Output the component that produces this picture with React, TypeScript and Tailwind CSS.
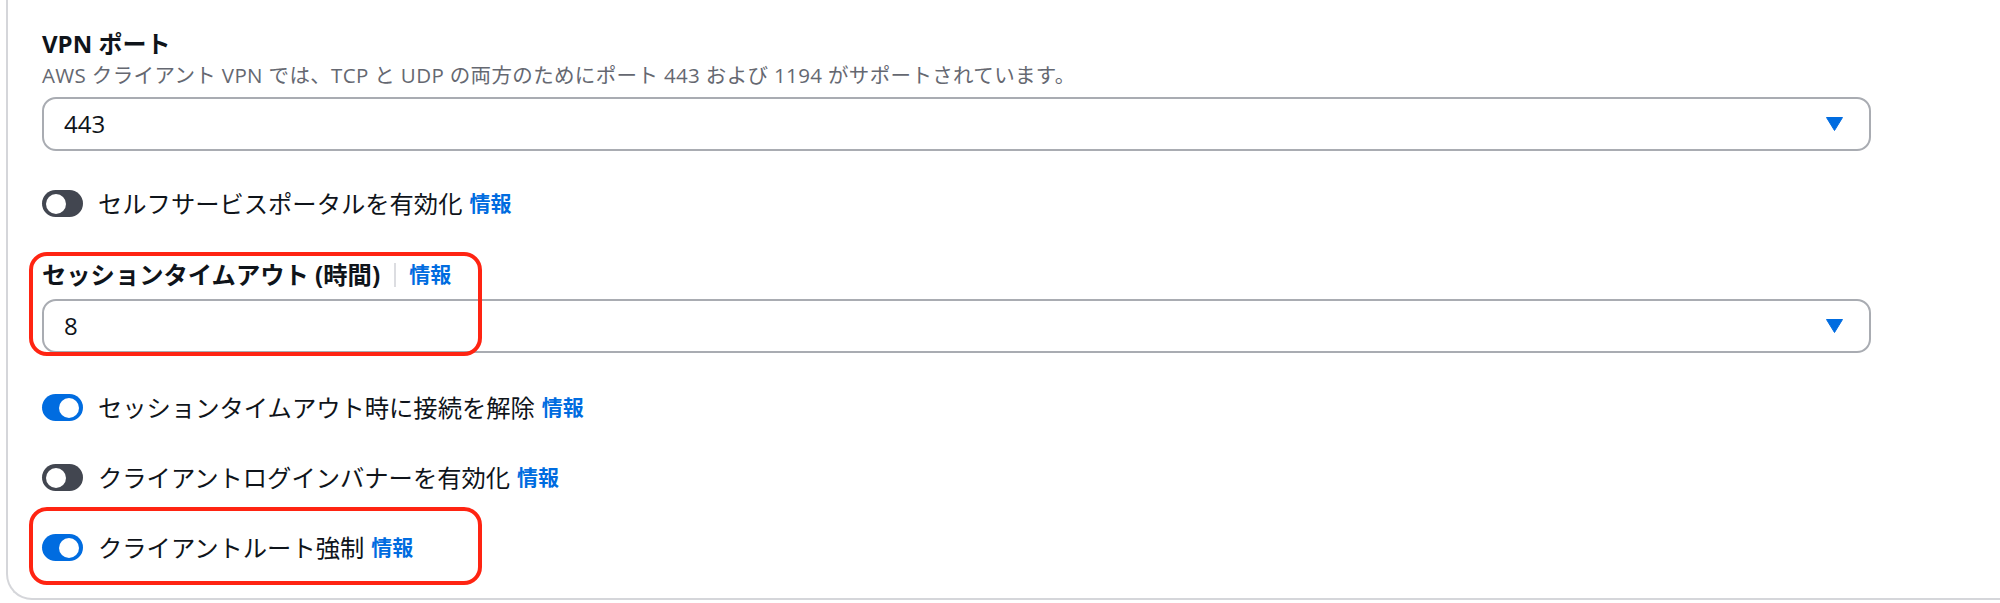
import React from "react";

const font = "font-['Open_Sans','Noto_Sans_CJK_JP',sans-serif]";

function Info() {
  return <a className="ml-[7px] text-[21px] font-bold text-[#006ce0]">情報</a>;
}

function Toggle({ on }: { on: boolean }) {
  return (
    <span
      className={`relative inline-flex h-[27px] w-[41px] shrink-0 items-center rounded-full ${
        on ? "bg-[#006ce0]" : "bg-[#424650]"
      }`}
    >
      <span
        className={`absolute top-[3.5px] h-[20px] w-[20px] rounded-full bg-white ${
          on ? "right-[4px]" : "left-[4px]"
        }`}
      />
    </span>
  );
}

function ToggleRow({ on, label }: { on: boolean; label: string }) {
  return (
    <div className="flex h-[37px] items-center">
      <Toggle on={on} />
      <span className="ml-[15px] text-[24.3px] leading-[37px] text-[#0f141a]">{label}</span>
      <Info />
    </div>
  );
}

function Select({ value }: { value: string }) {
  return (
    <div className="flex h-[54px] w-[1829px] items-center justify-between rounded-[14px] border-2 border-[#a9acb2] bg-white pl-[20px] pr-[26px]">
      <span className="text-[24px] text-[#0f141a]">{value}</span>
      <svg width="17" height="14" viewBox="0 0 17 14">
        <path d="M0.5 0.5 H16.5 L8.5 13.5 Z" fill="#006ce0" stroke="#006ce0" strokeLinejoin="round" />
      </svg>
    </div>
  );
}

function Highlight({ className }: { className: string }) {
  return (
    <div
      className={`pointer-events-none absolute rounded-[18px] border-[4px] border-[#ff2412] ${className}`}
    />
  );
}

export default function App() {
  return (
    <div className={`min-h-[603px] w-[2000px] overflow-hidden bg-white pl-[6px] ${font}`}>
      <div className="rounded-bl-[26px] border-b-2 border-l-2 border-[#d5d6da] pb-[32px] pl-[34px] pt-[25px]">
        <div>
          <div className="text-[24px] font-bold leading-[37px] text-[#0f141a]">VPN ポート</div>
          <div className="text-[20.5px] leading-[27px] tracking-[0.35px] text-[#656871]">
            AWS クライアント VPN では、TCP と UDP の両方のためにポート 443 および 1194 がサポートされています。
          </div>
          <div className="mt-[8px]">
            <Select value="443" />
          </div>
        </div>

        <div className="mt-[34px]">
          <ToggleRow on={false} label="セルフサービスポータルを有効化" />
        </div>

        <div className="relative mt-[34px]">
          <div className="flex h-[37px] items-center">
            <span className="text-[24.3px] font-bold leading-[37px] text-[#0f141a]">
              セッションタイムアウト (時間)
            </span>
            <span className="ml-[14px] h-[24px] w-[2px] bg-[#dcdde1]" />
            <a className="ml-[13px] text-[21px] font-bold text-[#006ce0]">情報</a>
          </div>
          <div className="mt-[6px]">
            <Select value="8" />
          </div>
          <Highlight className="left-[-13px] top-[-4px] h-[104px] w-[453px]" />
        </div>

        <div className="mt-[36px]">
          <ToggleRow on={true} label="セッションタイムアウト時に接続を解除" />
        </div>

        <div className="mt-[33px]">
          <ToggleRow on={false} label="クライアントログインバナーを有効化" />
        </div>

        <div className="relative mt-[33px]">
          <ToggleRow on={true} label="クライアントルート強制" />
          <Highlight className="left-[-13px] top-[-22px] h-[78px] w-[453px]" />
        </div>
      </div>
    </div>
  );
}
